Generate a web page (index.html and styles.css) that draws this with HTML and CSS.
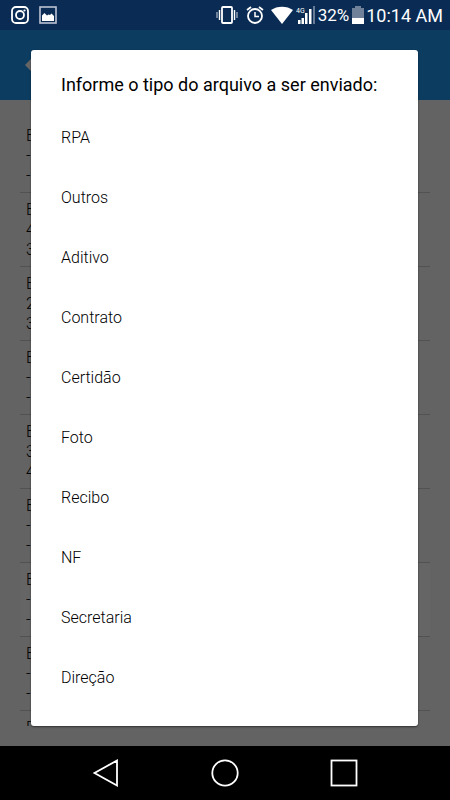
FILE: index.html
```html
<!DOCTYPE html>
<html lang="pt-BR">
<head>
  <meta charset="UTF-8" />
  <meta name="viewport" content="width=device-width, initial-scale=1.0"/>
  <title>Enviar arquivo</title>
  <link rel="stylesheet" href="styles.css">
</head>
<body>

<div class="screen">
  <div class="status-bar">
    <div class="status-left">
      <svg width="18" height="18" viewBox="0 0 18 18" fill="none" stroke="#fff">
        <rect x="1" y="1" width="16" height="16" rx="4" stroke-width="1.8"/>
        <circle cx="9" cy="9" r="4" stroke-width="1.8"/>
        <circle cx="13.5" cy="4.5" r="1.1" fill="#fff" stroke="none"/>
      </svg>
      <svg width="18" height="18" viewBox="0 0 18 18">
        <rect x="1" y="1" width="16" height="16" fill="none" stroke="#bcc3d2" stroke-width="1.6"/>
        <path d="M3 15V9.500l2.500-2.500L8 9.500l1.500-1L11 9l1.500-1.500L15 10v5z" fill="#fff"/>
      </svg>
    </div>
    <div class="status-right">
      <svg width="22" height="20" viewBox="0 0 22 20" fill="none" stroke="#fff">
        <rect x="6" y="2" width="10" height="16" rx="1" stroke-width="1.8"/>
        <path d="M3.5 5v10M18.500 5v10" stroke-width="1.4"/>
        <path d="M1 7v6M21 7v6" stroke="#b0bac9" stroke-width="1.2"/>
      </svg>
      <svg class="alarm" width="18" height="20" viewBox="0 0 18 20" fill="none" stroke="#fff">
        <circle cx="9" cy="11" r="7" stroke-width="1.8"/>
        <path d="M1 5l4-3M17 5l-4-3" stroke-width="1.8"/>
        <path d="M9 7v4.500h4" stroke-width="1.5"/>
      </svg>
      <svg class="wifi" width="22" height="20" viewBox="0 0 22 20">
        <path d="M0 5C6 .5 16 .5 22 5L11 19z" fill="#fff"/>
      </svg>
      <svg class="signal" width="20" height="20" viewBox="0 0 20 20" fill="#fff">
        <text class="signal-type" x="0" y="8">4G</text>
        <path d="M2 15h2.500v4H2zM5.500 13H8v6H5.500zM9 8h2.500v11H9zM13 4h2.500v15H13z"/>
        <path d="M17 1h2v18h-2z" fill="#667b96"/>
      </svg>
      <span class="battery-level">32%</span>
      <svg class="battery" width="12" height="20" viewBox="0 0 12 20">
        <path d="M3 1h6v2h3v16H0V3h3z" fill="#6e8199"/>
        <path d="M0 13h12v6H0z" fill="#fff"/>
      </svg>
      <span class="clock">10:14 AM</span>
    </div>
  </div>

  <div class="app">
    <header class="toolbar">
      <button class="back" aria-label="Voltar">
        <svg width="16" height="14" viewBox="0 0 16 14" fill="none" stroke="#666" stroke-width="3">
          <path d="M8 1L2 7l6 6M2 7h14"/>
        </svg>
      </button>
    </header>

    <main class="files">
      <ul class="file-list">
        <li>E<br>-<br>-</li>
        <li>E<br>4<br>3</li>
        <li>E<br>2<br>3</li>
        <li>E<br>-<br>-</li>
        <li>E<br>3<br>4</li>
        <li>E<br>-<br>-</li>
        <li class="light">E<br>-<br>-</li>
        <li>E<br>-<br>-</li>
        <li>E</li>
      </ul>
    </main>

    <div class="overlay">
      <div class="modal" role="dialog" aria-labelledby="modal-title">
        <h2 class="modal-title" id="modal-title">Informe o tipo do arquivo a ser enviado:</h2>
        <div class="options">
          <button class="option">RPA</button>
          <button class="option">Outros</button>
          <button class="option">Aditivo</button>
          <button class="option">Contrato</button>
          <button class="option">Certidão</button>
          <button class="option">Foto</button>
          <button class="option">Recibo</button>
          <button class="option">NF</button>
          <button class="option">Secretaria</button>
          <button class="option">Direção</button>
        </div>
      </div>
    </div>
  </div>

  <nav class="nav-bar">
    <button aria-label="Voltar">
      <svg width="28" height="28" viewBox="0 0 28 28" fill="none" stroke="#fff" stroke-width="1.8">
        <path d="M25 1.500v25L2.500 14z"/>
      </svg>
    </button>
    <button aria-label="Início">
      <svg width="28" height="28" viewBox="0 0 28 28" fill="none" stroke="#fff" stroke-width="1.8">
        <circle cx="14" cy="14" r="12.700"/>
      </svg>
    </button>
    <button aria-label="Recentes">
      <svg width="28" height="28" viewBox="0 0 28 28" fill="none" stroke="#fff" stroke-width="1.8">
        <rect x="1.500" y="1.500" width="25" height="25"/>
      </svg>
    </button>
  </nav>
</div>

</body>
</html>
```

FILE: styles.css
```css
* {
  box-sizing: border-box;
}

body {
  margin: 0;
  font-family: Roboto, sans-serif;
  background-color: #000;
}

button {
  margin: 0;
  padding: 0;
  border: none;
  background: none;
  font-family: inherit;
  cursor: pointer;
}

svg {
  display: block;
}

.screen {
  height: 100vh;
  display: flex;
  flex-direction: column;
}

/* status bar */
.status-bar {
  height: 30px;
  padding: 0 7px 0 11px;
  display: flex;
  align-items: center;
  justify-content: space-between;
  flex-shrink: 0;
  background-color: #0a2c54;
  color: #fff;
}

.status-left {
  display: flex;
  gap: 10px;
}

.status-right {
  display: flex;
  align-items: center;
}

.alarm {
  margin-left: 8px;
}

.wifi {
  margin-left: 7px;
}

.signal {
  margin-left: 3px;
}

.signal-type {
  font-size: 7px;
}

.battery-level {
  margin-left: 2px;
  font-size: 17px;
}

.battery {
  margin-left: 3px;
}

.clock {
  margin-left: 2px;
  font-size: 18px;
}

/* page behind the modal */
.app {
  position: relative;
  flex: 1;
  min-height: 0;
  display: flex;
  flex-direction: column;
  background-color: #636363;
}

.toolbar {
  height: 70px;
  padding: 0 25px;
  display: flex;
  align-items: center;
  flex-shrink: 0;
  background-color: #0c3c60;
}

.files {
  flex: 1;
  min-height: 0;
  padding: 19px 20px 20px;
}

.file-list {
  height: 100%;
  margin: 0;
  padding: 0;
  overflow: hidden;
  list-style: none;
}

.file-list li {
  padding: 7px 6px 6px;
  border-bottom: 1px solid #525252;
  font-size: 16px;
  font-weight: 300;
  line-height: 20px;
  color: #000;
}

.file-list .light {
  background-color: #656565;
}

/* modal */
.overlay {
  position: absolute;
  inset: 0;
  padding: 20px 32px 20px 31px;
}

.modal {
  height: 100%;
  padding: 20px 30px;
  overflow: hidden;
  border-radius: 3px;
  background-color: #fff;
  box-shadow: 0 1px 2px rgba(0,0,0,0.5);
}

.modal-title {
  margin: 0;
  font-size: 18px;
  font-weight: 400;
  line-height: 30px;
  color: #000;
}

.options {
  margin-top: 7px;
  display: flex;
  flex-direction: column;
}

.option {
  height: 60px;
  flex-shrink: 0;
  font-size: 16px;
  font-weight: 300;
  text-align: left;
  color: #000;
}

/* android buttons */
.nav-bar {
  height: 54px;
  padding: 0 46px;
  display: flex;
  align-items: center;
  justify-content: space-around;
  flex-shrink: 0;
  background-color: #000;
}
```
